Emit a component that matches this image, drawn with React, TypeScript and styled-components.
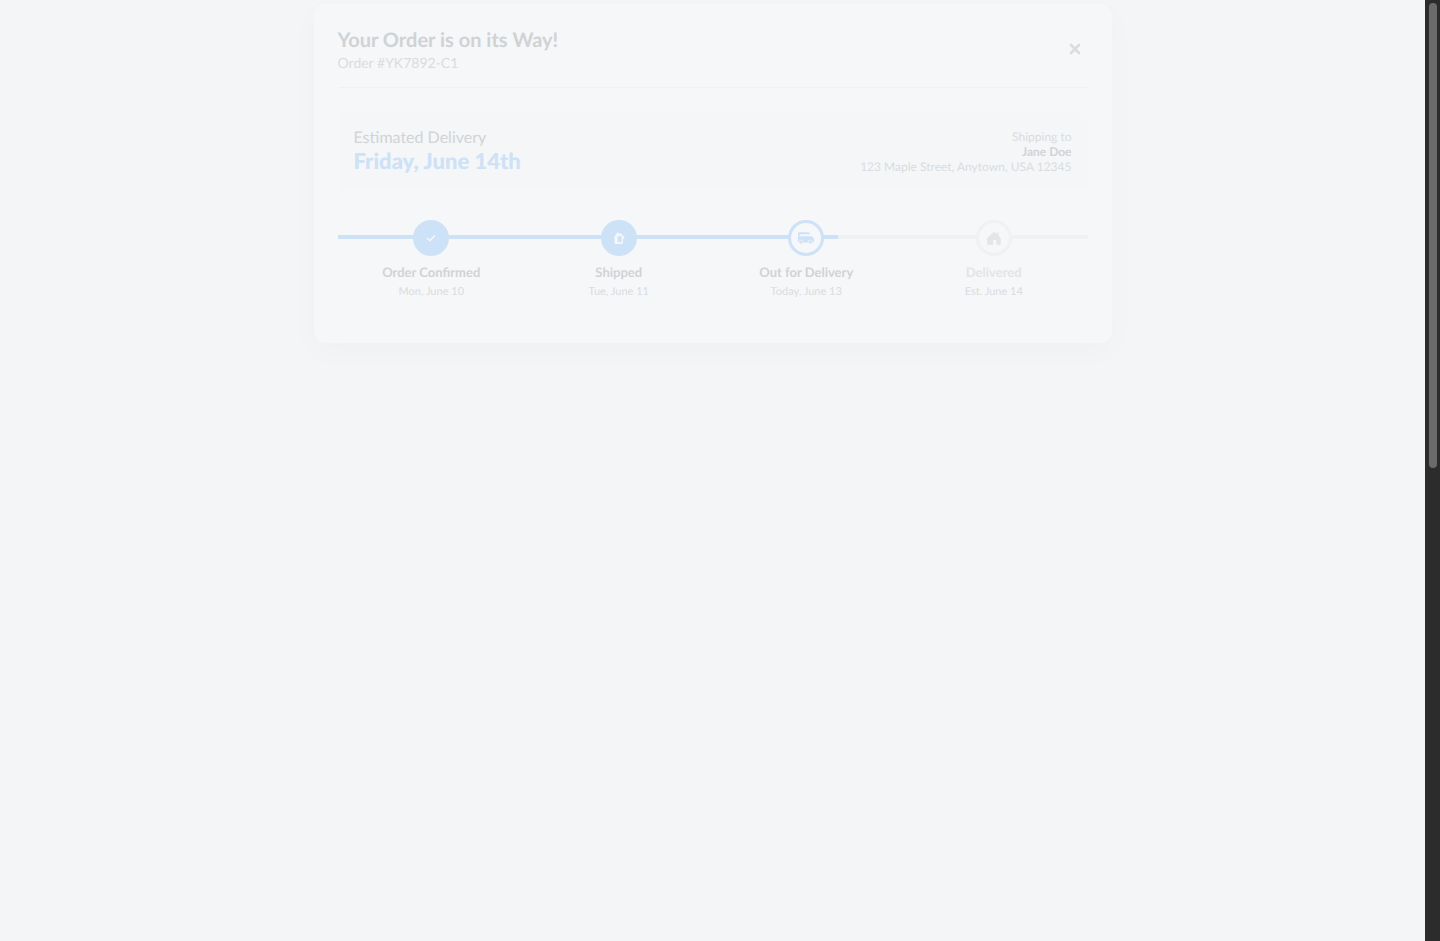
import React from "react";
import styled, { createGlobalStyle } from "styled-components";

const c = {
  page: "#f3f5f7",
  card: "#f5f7f9",
  panel: "#f4f6f8",
  line: "#eff1f3",
  blue: "#cde1f7",
  title: "#d0d2d4",
  text: "#d1d3d5",
  muted: "#dadcde",
  pale: "#e3e5e7",
};

const GlobalStyle = createGlobalStyle`
  *, *::before, *::after { box-sizing: border-box; }
  body {
    margin: 0;
    background: ${c.page};
    font-family: Lato, "Liberation Sans", sans-serif;
    text-rendering: geometricPrecision;
  }
  h1, p, ol { margin: 0; padding: 0; }
`;

const Shell = styled.div`
  display: flex;
  min-height: 100vh;
`;

const Page = styled.main`
  flex: 1;
  display: flex;
  align-items: flex-start;
  justify-content: center;
  padding: 4px 20px 20px;
`;

const ScrollTrack = styled.div`
  width: 15px;
  padding: 3px 3px 3px 4px;
  background: #2c2c2c;
`;

const ScrollThumb = styled.div`
  height: 465px;
  border-radius: 4px;
  background: #6b6b6b;
`;

const Card = styled.section`
  width: 100%;
  max-width: 798px;
  padding: 24px 24px 44px;
  border-radius: 12px;
  background: ${c.card};
  box-shadow: 0 8px 32px rgba(0, 0, 0, 0.025);
`;

const Header = styled.header`
  display: flex;
  align-items: flex-start;
  justify-content: space-between;
  padding-bottom: 14px;
  border-bottom: 1px solid ${c.line};
`;

const Title = styled.h1`
  font-size: 20px;
  line-height: 25px;
  font-weight: 700;
  color: ${c.title};
`;

const OrderNumber = styled.p`
  font-size: 14px;
  line-height: 20px;
  color: ${c.muted};
`;

const CloseButton = styled.button`
  display: flex;
  align-items: center;
  justify-content: center;
  width: 26px;
  height: 42px;
  padding: 0;
  border: 0;
  background: none;
  color: ${c.muted};
`;

const Summary = styled.div`
  display: flex;
  align-items: center;
  justify-content: space-between;
  margin: 24px 0 30px;
  padding: 16px;
  border-radius: 8px;
  background: ${c.panel};
`;

const EstimateLabel = styled.p`
  font-size: 16px;
  line-height: 20px;
  color: ${c.text};
`;

const EstimateDate = styled.p`
  font-size: 22px;
  line-height: 26px;
  font-weight: 900;
  color: ${c.blue};
`;

const Address = styled.p`
  text-align: right;
  font-size: 12px;
  line-height: 15px;
  color: ${c.muted};
`;

const Recipient = styled.strong`
  display: block;
  color: ${c.text};
`;

const Timeline = styled.div`
  display: grid;
`;

const Rail = styled.div`
  grid-area: 1 / 1;
  height: 4px;
  margin-top: 15px;
  background: ${c.line};
`;

const RailFill = styled.div`
  width: calc(200% / 3);
  height: 100%;
  background: ${c.blue};
`;

const Steps = styled.ol`
  grid-area: 1 / 1;
  z-index: 1;
  display: grid;
  grid-template-columns: repeat(4, 1fr);
  list-style: none;
`;

const Step = styled.li`
  display: flex;
  flex-direction: column;
  align-items: center;
  text-align: center;
`;

type State = "done" | "current" | "pending";

const Marker = styled.span<{ $state: State }>`
  display: flex;
  align-items: center;
  justify-content: center;
  width: 36px;
  height: 36px;
  margin-bottom: 8px;
  border: 3px solid ${(p) => (p.$state === "pending" ? c.line : c.blue)};
  border-radius: 50%;
  background: ${(p) => (p.$state === "done" ? c.blue : c.card)};
  color: ${(p) =>
    p.$state === "done" ? c.card : p.$state === "current" ? c.blue : c.pale};
`;

const StepName = styled.span<{ $state: State }>`
  font-size: 13px;
  line-height: 17px;
  font-weight: 700;
  color: ${(p) => (p.$state === "pending" ? c.pale : c.text)};
`;

const StepDate = styled.span`
  margin-top: 4px;
  font-size: 11px;
  line-height: 14px;
  color: ${c.muted};
`;

const CloseIcon = () => (
  <svg width="12" height="12" viewBox="0 0 12 12" aria-hidden="true">
    <path d="M2 2l8 8M10 2l-8 8" stroke="currentColor" strokeWidth="2.5" strokeLinecap="round" />
  </svg>
);

const CheckIcon = () => (
  <svg width="18" height="18" viewBox="0 0 18 18" fill="none" aria-hidden="true">
    <path d="M5.5 9.5l2.3 2.2 4.7-5" stroke="currentColor" strokeWidth="1.5" strokeLinecap="round" strokeLinejoin="round" />
  </svg>
);

const PackageIcon = () => (
  <svg width="18" height="18" viewBox="0 0 18 18" fill="none" aria-hidden="true">
    <path
      d="M5.4 6.2q.2-.9 1-1l.8-1.4q.3-.4.8-.2l1.6.9 2.1.4q.6.2.5.9l-.1.7 1.6.4q1 .3.8 1.2l-.5 1.1-1 .7v3.4q0 1.7-1.5 1.7H6.3q-1.8 0-2-1.4l.4-3.9-.9-.2zM7.6 7.3v5.9h4.1V7.3z"
      fill="currentColor"
      fillRule="evenodd"
    />
  </svg>
);

const TruckIcon = () => (
  <svg width="18" height="18" viewBox="0 0 18 18" aria-hidden="true">
    <path d="M2 3.2h9.6q1.2 0 1.2 1.3v.7H3.4q-1 0-1 1v1.2H1V4.2q0-1 1-1z" fill="currentColor" />
    <path d="M2.6 7.2H14q.7 0 1.1.5l1.5 1.5q.4.4.4 1v2.5q0 .8-.8.8H1.8q-.8 0-.8-.8V7.2z" fill="currentColor" />
    <circle cx="4.2" cy="13" r="2" fill="currentColor" stroke={c.card} strokeWidth="0.7" />
    <circle cx="13.2" cy="13" r="2" fill="currentColor" stroke={c.card} strokeWidth="0.7" />
  </svg>
);

const HomeIcon = () => (
  <svg width="18" height="18" viewBox="0 0 18 18" fill="currentColor" aria-hidden="true">
    <path d="M8.3 3.2q.7-.6 1.4 0l2.1 2V3.6h1.8v3.3l1.6 1.5q.6.6.6 1.4v5q0 1-1 1h-3.4v-4q0-.8-.8-.8H9q-.9 0-.9.8v4H3.2q-1 0-1-1v-5q0-.8.6-1.4z" />
  </svg>
);

const steps: { name: string; date: string; state: State; icon: React.ReactNode }[] = [
  { name: "Order Confirmed", date: "Mon, June 10", state: "done", icon: <CheckIcon /> },
  { name: "Shipped", date: "Tue, June 11", state: "done", icon: <PackageIcon /> },
  { name: "Out for Delivery", date: "Today, June 13", state: "current", icon: <TruckIcon /> },
  { name: "Delivered", date: "Est. June 14", state: "pending", icon: <HomeIcon /> },
];

export default function App() {
  return (
    <Shell>
      <GlobalStyle />
      <Page>
        <Card>
          <Header>
            <div>
              <Title>Your Order is on its Way!</Title>
              <OrderNumber>Order #YK7892-C1</OrderNumber>
            </div>
            <CloseButton type="button" aria-label="Close">
              <CloseIcon />
            </CloseButton>
          </Header>
          <Summary>
            <div>
              <EstimateLabel>Estimated Delivery</EstimateLabel>
              <EstimateDate>Friday, June 14th</EstimateDate>
            </div>
            <Address>
              Shipping to
              <Recipient>Jane Doe</Recipient>
              123 Maple Street, Anytown, USA 12345
            </Address>
          </Summary>
          <Timeline>
            <Rail>
              <RailFill />
            </Rail>
            <Steps>
              {steps.map((s) => (
                <Step key={s.name}>
                  <Marker $state={s.state}>{s.icon}</Marker>
                  <StepName $state={s.state}>{s.name}</StepName>
                  <StepDate>{s.date}</StepDate>
                </Step>
              ))}
            </Steps>
          </Timeline>
        </Card>
      </Page>
      <ScrollTrack aria-hidden="true">
        <ScrollThumb />
      </ScrollTrack>
    </Shell>
  );
}
